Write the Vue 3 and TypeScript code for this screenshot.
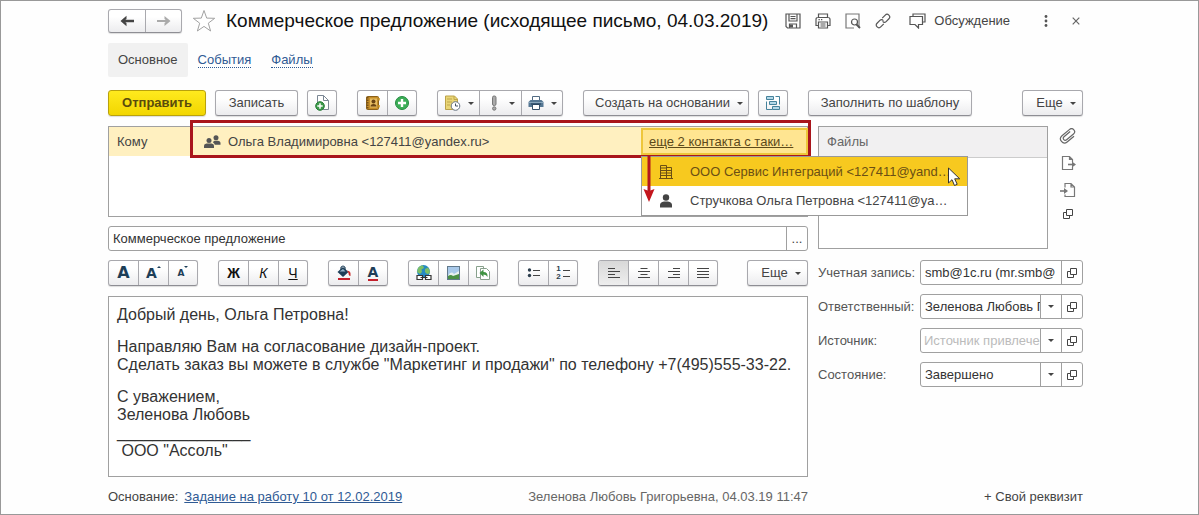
<script setup lang="ts">
import { ref } from 'vue'

interface Contact {
  kind: 'company' | 'person'
  label: string
}

const contacts: Contact[] = [
  { kind: 'company', label: 'ООО Сервис Интеграций <127411@yand…' },
  { kind: 'person', label: 'Стручкова Ольга Петровна <127411@ya…' },
]
const activeContact = ref(0)
const subject = ref('Коммерческое предложение')
const account = ref('smb@1c.ru (mr.smb@')

interface Field {
  id: string
  label: string
  value: string
  empty?: boolean
}

const fields: Field[] = [
  { id: 'owner', label: 'Ответственный:', value: 'Зеленова Любовь Григорьевна' },
  { id: 'source', label: 'Источник:', value: 'Источник привлечения', empty: true },
  { id: 'state', label: 'Состояние:', value: 'Завершено' },
]

const aligns = [
  { name: 'По левому краю', d: 'M1 2.5h7M1 5.5h12M1 8.5h7M1 11.5h12' },
  { name: 'По центру', d: 'M3.500 2.500h7M1 5.500h12M3.500 8.500h7M1 11.500h12' },
  { name: 'По правому краю', d: 'M6 2.5h7M1 5.5h12M6 8.5h7M1 11.5h12' },
  { name: 'По ширине', d: 'M1 2.5h12M1 5.5h12M1 8.5h12M1 11.5h12' },
]
const activeAlign = ref(0)
</script>

<template>
  <main class="window">
    <header class="titlebar">
      <div class="group nav">
        <button type="button" aria-label="Назад">
          <svg width="16" height="12" viewBox="0 0 16 12"><path d="M15 6H4" stroke="#444" stroke-width="2.400" /><path d="M7.500 0.800 1.500 6l6 5.200V8L5 6l2.500-2z" fill="#444" /></svg>
        </button>
        <button type="button" aria-label="Вперед">
          <svg width="16" height="12" viewBox="0 0 16 12"><path d="M1 6h11" stroke="#aaa" stroke-width="2" /><path d="M8.500 1 14.500 6l-6 5V8L11 6 8.500 4z" fill="#aaa" /></svg>
        </button>
      </div>
      <button type="button" class="bare star" aria-label="В избранное">
        <svg width="24" height="24" viewBox="0 0 24 24"><path d="M12 1.500l2.700 7.600 8 .2-6.400 4.900 2.300 7.800L12 17.400 5.400 22l2.300-7.800L1.300 9.300l8-.2z" fill="#fff" stroke="#a2a2a2" /></svg>
      </button>
      <h1>Коммерческое предложение (исходящее письмо, 04.03.2019)</h1>
      <div class="title-tools">
        <button type="button" class="bare" aria-label="Сохранить">
          <svg width="16" height="16" viewBox="0 0 16 16" fill="none" stroke="#555" stroke-width="1.200"><path d="M1 1h14v14H2.500L1 13.500zM4 1v7h8V1M5.500 3.500h5M5.500 5.700h5M4.500 15v-4h7v4" /><path d="M5 11.500h3v3H5z" fill="#555" stroke="none" /></svg>
        </button>
        <button type="button" class="bare" aria-label="Печать">
          <svg width="16" height="16" viewBox="0 0 16 16" fill="none" stroke="#555" stroke-width="1.200"><path d="M3.500 4.500V1h9v3.500M3.500 12.500H1v-6q0-2 2-2h10q2 0 2 2v6h-2.500M3.500 9h9v6h-9zM5.500 11h5M5.500 13h5M3.500 6.700h1.300M6 6.700h1.300" /></svg>
        </button>
        <button type="button" class="bare" aria-label="Предварительный просмотр">
          <svg width="16" height="16" viewBox="0 0 16 16" fill="none" stroke="#555" stroke-width="1.200"><path d="M9 15H1V1h13v14" stroke="#777" /><circle cx="9.500" cy="9" r="3" /><path d="M11.500 11.500 15 15" stroke-width="1.800" /></svg>
        </button>
        <button type="button" class="bare" aria-label="Ссылка">
          <svg width="16" height="16" viewBox="0 0 16 16" fill="none" stroke="#555" stroke-width="1.200"><g transform="rotate(-45 8 8)"><path d="M6.500 10.600H2.200Q-.3 10.600-.3 8t2.500-2.600h4Q8.600 5.400 8.600 8M9.500 5.400h4.300q2.500 0 2.500 2.600t-2.500 2.600h-4Q7.400 10.600 7.400 8" /></g></svg>
        </button>
        <button type="button" class="bare chat">
          <svg width="17" height="16" viewBox="0 0 17 16" fill="none" stroke="#555" stroke-width="1.200"><path d="M4 3V1h12v8h-2M1 3.500h12.500v8H9.500V15L6 11.500H1z" /></svg>
          Обсуждение
        </button>
      </div>
      <div class="window-tools">
        <button type="button" class="bare" aria-label="Меню">
          <svg width="4" height="12" viewBox="0 0 4 12" fill="#555"><circle cx="2" cy="1.500" r="1.400" /><circle cx="2" cy="6" r="1.400" /><circle cx="2" cy="10.500" r="1.400" /></svg>
        </button>
        <button type="button" class="bare" aria-label="Закрыть">
          <svg width="8" height="8" viewBox="0 0 8 8"><path d="M.7.7l6.600 6.600M7.300.7.7 7.300" stroke="#666" stroke-width="1.200" /></svg>
        </button>
      </div>
    </header>

    <nav class="tabs">
      <span class="tab current">Основное</span>
      <a class="tab" href="#events"><span>События</span></a>
      <a class="tab" href="#files"><span>Файлы</span></a>
    </nav>

    <div class="commands">
      <div class="cluster">
        <button type="button" class="button primary">Отправить</button>
        <button type="button" class="button save">Записать</button>
        <button type="button" class="button icon" aria-label="Создать документ">
          <svg width="16" height="18" viewBox="0 0 16 18"><path d="M3.500 10V1.500h6l5 5v9H9" fill="#fff" stroke="#7b8794" /><path d="M9.500 1.500v5h5" fill="none" stroke="#7b8794" /><circle cx="6" cy="12" r="4.300" fill="#3c9b4b" stroke="#267a35" /><path d="M6 9.300v5.400M3.300 12h5.400" stroke="#fff" stroke-width="1.500" /></svg>
        </button>
      </div>
      <div class="group icons">
        <button type="button" aria-label="Адресная книга">
          <svg width="16" height="16" viewBox="0 0 16 16"><rect x="1.500" y="1.500" width="12" height="13" rx="1" fill="#c68e28" stroke="#8b611a" /><path d="M2.500 2v12" stroke="#765018" stroke-width="2" stroke-dasharray="1.500 1" /><path d="M13.500 3h1.500v2.500h-1.500zM13.500 10h1.500v2.500h-1.500z" fill="#dfb24a" /><rect x="5" y="3.500" width="7" height="9" fill="#e6bd62" /><circle cx="8.500" cy="6.500" r="2" fill="#694414" /><path d="M5.500 11.500q0-2.500 3-2.500t3 2.500z" fill="#694414" /></svg>
        </button>
        <button type="button" aria-label="Добавить">
          <svg width="16" height="16" viewBox="0 0 16 16"><circle cx="8" cy="8" r="6.500" fill="#3dae58" stroke="#258c40" /><path d="M8 4v8M4 8h8" stroke="#fff" stroke-width="2.400" /></svg>
        </button>
      </div>
      <div class="group menus">
        <button type="button" aria-label="Напоминание">
          <svg width="17" height="16" viewBox="0 0 17 16"><path d="M1.500 1h9l3 3v10.500h-12z" fill="#ead676" stroke="#bba24a" /><path d="M3 4h5M3 7h5M3 10h3M10 1v3.500h3.500" fill="none" stroke="#bfa74c" /><circle cx="11.500" cy="11" r="4.300" fill="#fff" stroke="#667482" /><path d="M11.500 8.500V11h2.500" fill="none" stroke="#445260" /></svg>
          <i class="caret"></i>
        </button>
        <button type="button" aria-label="Важность">
          <svg width="16" height="16" viewBox="0 0 16 16"><rect x="6.500" y="1" width="3.500" height="9.500" rx="1.500" fill="#aaa" stroke="#777" /><circle cx="8.250" cy="13.500" r="1.700" fill="#aaa" stroke="#777" /></svg>
          <i class="caret"></i>
        </button>
        <button type="button" aria-label="Печать">
          <svg width="16" height="16" viewBox="0 0 16 16"><path d="M4.500 6V1.500h7V6" fill="#fff" stroke="#526b82" /><path d="M2.500 5h11L15.500 7v5H.5V7z" fill="#557793" /><path d="M1 7.500h14" stroke="#89a6bb" /><path d="M4.500 9.500h7v5h-7z" fill="#fff" stroke="#365069" /><path d="M3 9h10" stroke="#213d56" /></svg>
          <i class="caret"></i>
        </button>
      </div>
      <div class="cluster">
        <button type="button" class="button based">Создать на основании <i class="caret"></i></button>
        <button type="button" class="button icon" aria-label="Структура подчиненности">
          <svg width="16" height="16" viewBox="0 0 16 16"><g fill="#b4d8e8" stroke="#45829b"><path d="M1.500 6.500v8h6M10.500 1.500h4v8" fill="none" /><path d="M1.500 1.500h7v3h-7zM4.500 6.500h7v3h-7zM7.500 11.500h7v3h-7z" /></g></svg>
        </button>
      </div>
      <button type="button" class="button template">Заполнить по шаблону</button>
      <button type="button" class="button more">Еще <i class="caret"></i></button>
    </div>

    <div class="body">
      <section class="letter">
        <div class="recipients">
          <div class="recipient">
            <span class="to">Кому</span>
            <div class="address">
              <svg width="17" height="14" viewBox="0 0 17 14" fill="#555"><circle cx="5" cy="5.500" r="2.500" /><path d="M0 13V10.500Q0 9 2.500 8.500h5Q10 9 10 10.500V13z" /><circle cx="12" cy="2.800" r="2.500" /><path d="M9 7.500q.5-1.500 1.500-1.700h3.500q2.500.5 2.500 2v2h-5.700q-.3-1.500-1.800-2.300z" /></svg>
              <span class="person">Ольга Владимировна &lt;127411@yandex.ru&gt;</span>
              <div class="others">
                <a href="#contacts">еще 2 контакта с таки…</a>
                <div class="popup">
                  <button
                    v-for="(contact, index) in contacts"
                    :key="contact.label"
                    type="button"
                    :class="{ active: index === activeContact }"
                    @click="activeContact = index"
                  >
                    <svg v-if="contact.kind === 'company'" width="14" height="14" viewBox="0 0 14 14"><path d="M1.500.5h6v13h-6zM7.500 2.500h5v11h-5z" fill="none" stroke="#6b4f14" /><path d="M1.500 3h6M1.500 5.500h6M1.500 8h6M1.500 10.500h6M7.500 5.500h5M7.500 8h5M7.500 10.500h5M0 13.500h14" stroke="#6b4f14" /></svg>
                    <svg v-else width="14" height="14" viewBox="0 0 14 14" fill="#444"><circle cx="7" cy="3.500" r="3.200" /><path d="M1 13.500V11q0-3 4-3.500h4q4 .5 4 3.500v2.500z" /></svg>
                    <span>{{ contact.label }}</span>
                  </button>
                  <svg class="pointer" width="14" height="20" viewBox="0 0 14 20"><path d="M1.500 1v15l3.500-3.300 2.500 5.800 2.700-1.200-2.500-5.500h5z" fill="#fff" stroke="#333" /></svg>
                </div>
                <svg class="arrow" width="12" height="46" viewBox="0 0 12 46"><path d="M6 0v36" stroke="#b3161d" stroke-width="3" /><path d="M.5 33 6 35l5.500-2L6 46z" fill="#c4161d" /></svg>
              </div>
            </div>
          </div>
        </div>

        <div class="field subject">
          <input v-model="subject" type="text" aria-label="Тема" />
          <button type="button" aria-label="Выбрать тему">...</button>
        </div>

        <div class="formatting">
          <div class="group icons">
            <button type="button" class="font-large" aria-label="Шрифт">A</button>
            <button type="button" class="font-up" aria-label="Увеличить шрифт">A<i class="up"></i></button>
            <button type="button" class="font-down" aria-label="Уменьшить шрифт">A<i class="down"></i></button>
          </div>
          <div class="group icons style">
            <button type="button"><b>Ж</b></button>
            <button type="button"><em>К</em></button>
            <button type="button"><u>Ч</u></button>
          </div>
          <div class="group icons">
            <button type="button" aria-label="Цвет фона">
              <svg width="16" height="16" viewBox="0 0 16 16"><path d="M7 2l5.500 5-5.500 5-5.500-5z" fill="#1d3e58" /><path d="M5 5V2.500q2-3 4 0V6" fill="none" stroke="#1d3e58" stroke-width="1.200" /><path d="M3.500 6.500h6L7 4z" fill="#9ab6cb" /><path d="M11 5.500q3.500.5 3.500 3v2.500q-2 0-2-3z" fill="#c92a2a" /><path d="M2 14h12" stroke="#c4202c" stroke-width="2" /></svg>
            </button>
            <button type="button" class="font-color" aria-label="Цвет текста"><span>A</span></button>
          </div>
          <div class="group icons">
            <button type="button" aria-label="Гиперссылка">
              <svg width="18" height="18" viewBox="0 0 18 18"><circle cx="8.500" cy="7.500" r="6.500" fill="#268ac2" /><path d="M3 4q2-3 5-2.500L9 4 6.500 5.500 7 8l-2 2-3-2zM10 5l3-1.500q2.500 3 1.500 6L12 10l-2-2z" fill="#7cbf67" /><path d="M2 11.500h5.500v4H2zM10.500 11.500H16v4h-5.500zM5.500 13.500h7" fill="#fff" stroke="#333" stroke-width="1.200" /></svg>
            </button>
            <button type="button" aria-label="Картинка">
              <svg width="16" height="16" viewBox="0 0 16 16"><rect x="1.500" y="1.500" width="12" height="13" fill="#a9c9ea" stroke="#62798c" /><path d="M2 10.500q3-5 6-1.500l5-3v3l-4 3H2z" fill="#e8f0ef" /><path d="M2 11q3-2 5 0l6-2v5H2z" fill="#4b9045" /></svg>
            </button>
            <button type="button" aria-label="Вставить">
              <svg width="16" height="16" viewBox="0 0 16 16"><path d="M1.500 1.500h7v11h-7z" fill="#fff" stroke="#87a08c" /><path d="M5.500 3.500h6l3 3v8h-9z" fill="#fff" stroke="#87a08c" /><path d="M4.500 8 8.500 4.500V7q4.500 0 4 5-1-2.500-4-2.500V12z" fill="#3f9342" /></svg>
            </button>
          </div>
          <div class="group icons">
            <button type="button" aria-label="Маркированный список">
              <svg width="14" height="14" viewBox="0 0 14 14"><circle cx="2.500" cy="4" r="1.700" fill="#2c3e4d" /><circle cx="2.500" cy="9.500" r="1.700" fill="#2c3e4d" /><path d="M6 4.500h7M6 9.500h7" stroke="#444" /></svg>
            </button>
            <button type="button" class="numbered" aria-label="Нумерованный список">
              <span>1<br />2</span>
              <svg width="7" height="14" viewBox="0 0 7 14"><path d="M0 4.500h7M0 10.500h7" stroke="#444" /></svg>
            </button>
          </div>
          <div class="group icons">
            <button
              v-for="(align, index) in aligns"
              :key="align.name"
              type="button"
              :aria-label="align.name"
              :class="{ pressed: index === activeAlign }"
              @click="activeAlign = index"
            >
              <svg width="14" height="14" viewBox="0 0 14 14"><path :d="align.d" stroke="#444" /></svg>
            </button>
          </div>
          <button type="button" class="button more">Еще <i class="caret"></i></button>
        </div>

        <div class="editor" role="textbox" aria-multiline="true" aria-label="Текст письма" contenteditable="true">
          <p>Добрый день, Ольга Петровна!</p>
          <p>Направляю Вам на согласование дизайн-проект.<br />Сделать заказ вы можете в службе "Маркетинг и продажи" по телефону +7(495)555-33-22.</p>
          <p>С уважением,<br />Зеленова Любовь<br />_______________<br />&nbsp;ООО "Ассоль"</p>
        </div>

        <footer class="footer">
          <span>Основание:</span>
          <a href="#task">Задание на работу 10 от 12.02.2019</a>
          <span class="stamp">Зеленова Любовь Григорьевна, 04.03.19 11:47</span>
        </footer>
      </section>

      <aside class="side">
        <div class="attachments">
          <div class="files"><div class="files-head">Файлы</div></div>
          <div class="file-tools">
            <button type="button" class="bare" aria-label="Прикрепить">
              <svg width="18" height="16" viewBox="0 0 18 16" fill="none" stroke="#666" stroke-width="1.200"><g transform="rotate(-40 9 8)"><path d="M13.500 6H5.500Q3.500 6 3.500 8t2 2h9q3 0 3-3t-3-3h-10Q.5 4 .5 8t4 4h9" /></g></svg>
            </button>
            <button type="button" class="bare" aria-label="Выгрузить">
              <svg width="16" height="16" viewBox="0 0 16 16" fill="none" stroke="#777" stroke-width="1.200"><path d="M12.500 7V4.500l-3-3H2.500v13h10V12M9.500 1.500v3h3" /><path d="M8 9.500h6" stroke-width="1.600" /><path d="M12 6.500l4 3-4 3z" fill="#777" stroke="none" /></svg>
            </button>
            <button type="button" class="bare" aria-label="Загрузить">
              <svg width="16" height="16" viewBox="0 0 16 16" fill="none" stroke="#777" stroke-width="1.200"><path d="M5 5.500v-4h6l3.500 3.500v9.500H5v-2M11 1.500V5h3.500" /><path d="M0 9h6" stroke-width="1.600" /><path d="M4 6l4 3-4 3z" fill="#777" stroke="none" /></svg>
            </button>
            <button type="button" class="bare" aria-label="Открыть файл">
              <svg width="10" height="10" viewBox="0 0 10 10" fill="none" stroke="#444"><path d="M3.500.5h6v6h-6zM3.500 3.500h-3v6h6v-3" /></svg>
            </button>
          </div>
        </div>

        <div class="row">
          <label for="account">Учетная запись:</label>
          <div class="field">
            <input id="account" v-model="account" type="text" />
            <button type="button" aria-label="Открыть учетную запись">
              <svg width="10" height="10" viewBox="0 0 10 10" fill="none" stroke="#444"><path d="M3.500.5h6v6h-6zM3.500 3.500h-3v6h6v-3" /></svg>
            </button>
          </div>
        </div>
        <div v-for="field in fields" :key="field.id" class="row">
          <label :for="field.id">{{ field.label }}</label>
          <div class="field">
            <select :id="field.id" :class="{ empty: field.empty }">
              <option>{{ field.value }}</option>
            </select>
            <span class="drop" aria-hidden="true"><i class="caret"></i></span>
            <button type="button" :aria-label="'Открыть: ' + field.label">
              <svg width="10" height="10" viewBox="0 0 10 10" fill="none" stroke="#444"><path d="M3.500.5h6v6h-6zM3.500 3.500h-3v6h6v-3" /></svg>
            </button>
          </div>
        </div>
        <button type="button" class="bare custom">+ Свой реквизит</button>
      </aside>
    </div>
  </main>
</template>

<style>
body {
  margin: 0;
  background: #fefefe;
}
</style>

<style scoped>
.window {
  box-sizing: border-box;
  min-height: 100vh;
  padding: 7px 115px 0 107px;
  border: 1px solid #999;
  background: #fefefe;
  color: #444;
  font: 13px/16px "Liberation Sans", Arial, sans-serif;
}
.window * {
  box-sizing: border-box;
}
button,
input,
select {
  margin: 0;
  padding: 0;
  border: 0;
  background: none;
  color: inherit;
  font: inherit;
}
svg {
  display: block;
  flex: none;
}
.bare {
  display: flex;
  align-items: center;
  justify-content: center;
}
.button,
.group {
  display: flex;
  flex: none;
  align-items: center;
  justify-content: center;
  height: 26px;
  border: 1px solid #a9a9ae;
  border-bottom-color: #8e8e94;
  border-radius: 3px;
  background: linear-gradient(#fff 30%, #ececee);
  box-shadow: 0 1px 1px #ddd;
}
.group {
  overflow: hidden;
}
.group button {
  display: flex;
  align-items: center;
  justify-content: center;
  height: 100%;
}
.group button + button {
  border-left: 1px solid #a9a9ae;
}
.icons button {
  width: 30px;
}
.icons button:first-child {
  width: 29px;
}
.icons button:last-child {
  width: 29px;
}
.caret {
  width: 0;
  border: 3px solid transparent;
  border-top-color: #444;
  border-bottom: 0;
}

/* title */
.titlebar {
  display: flex;
  align-items: center;
  height: 26px;
}
.nav {
  height: 24px;
}
.nav button {
  width: 36px;
}
.star {
  margin-left: 10px;
}
h1 {
  margin: 0 0 0 10px;
  color: #111;
  font-size: 19px;
  font-weight: 400;
  line-height: 24px;
  white-space: nowrap;
}
.title-tools {
  display: flex;
  gap: 14px;
  margin-left: 17px;
}
.chat {
  gap: 8px;
  margin-left: 4px;
}
.window-tools {
  display: flex;
  gap: 24px;
  margin-left: auto;
  padding-right: 3px;
}

/* tabs */
.tabs {
  display: flex;
  margin-top: 9px;
}
.tab {
  padding: 9px 10px;
  color: #2f5a94;
  text-decoration: none;
}
.tab span {
  border-bottom: 1px dotted #2f5a94;
}
.current {
  border-radius: 2px;
  background: #f1f1f1;
  color: #444;
}

/* commands */
.commands {
  display: flex;
  gap: 20px;
  margin-top: 13px;
}
.cluster {
  display: flex;
  gap: 9px;
}
.primary {
  width: 98px;
  border-color: #b9a20c;
  background: linear-gradient(#ffea1e, #f2d600);
  color: #5a4c0c;
  font-weight: 700;
}
.save {
  width: 83px;
}
.icon {
  width: 30px;
}
.menus button {
  gap: 7px;
  width: 42px;
}
.menus button:first-child,
.menus button:last-child {
  width: 41px;
}
.based {
  gap: 7px;
  width: 166px;
  padding-left: 6px;
}
.template {
  width: 164px;
}
.more {
  gap: 7px;
  width: 61px;
  margin-left: auto;
  padding-left: 7px;
}

/* letter */
.body {
  display: flex;
  gap: 10px;
  margin-top: 10px;
}
.letter {
  flex: 1;
  min-width: 0;
}
.recipients {
  height: 91px;
  border: 1px solid #a0a0a0;
  background: #fff;
}
.recipient {
  display: flex;
  align-items: center;
  height: 29px;
  background: #fff0c0;
}
.to {
  width: 81px;
  padding-left: 8px;
}
.address {
  display: flex;
  flex: 1;
  align-items: center;
  height: 38px;
  margin: -7px -4px -2px 0;
  padding: 5px 0 0 11px;
  border: 3px solid #a9151c;
}
.person {
  margin-left: 7px;
}
.others {
  position: relative;
  width: 167px;
  height: 27px;
  margin-left: auto;
  padding: 4px 6px;
  border: 2px solid #eec63a;
  background: #ffe591;
  white-space: nowrap;
}
.others a {
  color: #5c4a1a;
}
.popup {
  position: absolute;
  z-index: 1;
  top: 26px;
  left: -2px;
  width: 327px;
  border: 1px solid #999;
  background: #fff;
}
.popup button {
  display: flex;
  gap: 17px;
  align-items: center;
  width: 100%;
  height: 29px;
  padding-left: 17px;
}
.popup .active {
  background: #f7c91f;
  color: #6b4f14;
}
.pointer {
  position: absolute;
  top: 10px;
  right: 6px;
}
.arrow {
  position: absolute;
  z-index: 2;
  top: 26px;
  left: 0;
}
.field {
  display: flex;
  overflow: hidden;
  height: 25px;
  border: 1px solid #a0a0a0;
  border-radius: 3px;
  background: #fff;
}
.field input,
.field select {
  flex: 1;
  min-width: 0;
  padding: 0 0 0 4px;
  color: #333;
}
.field select {
  appearance: none;
}
.field .empty {
  padding-left: 3px;
  color: #bbb;
}
.field button,
.drop {
  display: flex;
  flex: none;
  align-items: center;
  justify-content: center;
  width: 21px;
  border-left: 1px solid #a0a0a0;
}
.subject {
  margin-top: 9px;
}
.formatting {
  display: flex;
  gap: 20px;
  margin-top: 9px;
}
.font-large,
.font-up,
.font-down,
.font-color {
  color: #1d3e58;
  font-family: "DejaVu Sans", sans-serif;
  font-weight: 700;
}
.font-large {
  font-size: 16px;
}
.font-up,
.font-color {
  font-size: 14px;
}
.font-down {
  font-size: 9px;
}
.up,
.down {
  align-self: flex-start;
  margin-top: 5px;
  border: 2px solid transparent;
}
.up {
  border-top: 0;
  border-bottom-color: #1d3e58;
}
.down {
  border-top-color: #1d3e58;
  border-bottom: 0;
}
.font-color span {
  height: 15px;
  border-bottom: 2px solid #c4202c;
  line-height: 13px;
}
.style {
  color: #111;
  font-size: 14px;
}
.numbered {
  gap: 2px;
  color: #2c3e4d;
  font-size: 8px;
  font-weight: 700;
  line-height: 8px;
}
.pressed {
  background: linear-gradient(#d8d8d8, #eee);
}
.editor {
  min-height: 181px;
  margin-top: 10px;
  padding: 9px 8px;
  border: 1px solid #a0a0a0;
  background: #fff;
  color: #333;
  font-size: 16px;
  line-height: 18px;
}
.editor p {
  margin: 0 0 14px;
}
.editor p:last-child {
  margin-bottom: 0;
}
.footer {
  display: flex;
  gap: 6px;
  margin-top: 12px;
}
.footer a {
  color: #2f5a94;
}
.stamp {
  margin-left: auto;
  color: #666;
}

/* side */
.side {
  display: flex;
  flex: none;
  flex-direction: column;
  width: 265px;
}
.attachments {
  display: flex;
  margin-bottom: 2px;
}
.files {
  flex: 1;
  height: 123px;
  border: 1px solid #a0a0a0;
  background: #fff;
}
.files-head {
  height: 31px;
  padding: 7px 8px;
  border-bottom: 1px solid #ccc;
  background: #f1f0f1;
  color: #666;
}
.file-tools {
  display: flex;
  flex-direction: column;
  gap: 11px;
  align-items: center;
  width: 40px;
  margin-right: -5px;
  padding-top: 2px;
}
.row {
  display: flex;
  align-items: center;
  margin-top: 9px;
}
.row label {
  width: 102px;
  color: #555;
}
.row .field {
  flex: 1;
}
.custom {
  align-self: flex-end;
  margin-top: auto;
}
</style>
